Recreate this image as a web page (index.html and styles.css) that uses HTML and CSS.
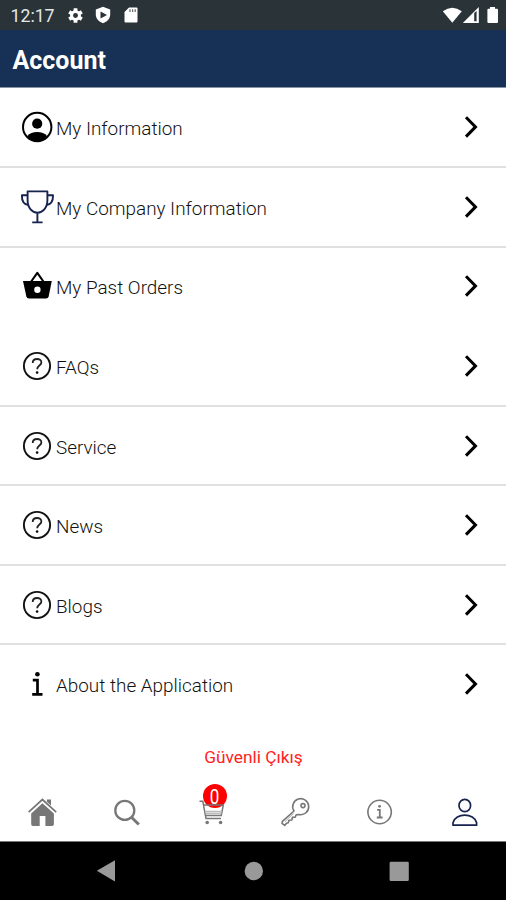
FILE: index.html
```html
<!DOCTYPE html>
<html lang="en">
<head>
<meta charset="utf-8">
<title>Account</title>
<link rel="stylesheet" href="styles.css">
</head>
<body>
<svg class="defs" aria-hidden="true">
  <symbol id="chevron" viewBox="0 0 16 26"><path d="M3 3.2 L12.5 12.9 L3 22.6" fill="none" stroke="#000" stroke-width="3"/></symbol>
  <symbol id="question" viewBox="0 0 36 36"><circle cx="18" cy="18" r="13.1" fill="none" stroke="#111" stroke-width="1.9"/><path d="M13.7 14.9 C13.7 9.8 22.4 9.7 22.4 14.5 C22.4 17.6 18.2 17.6 18.2 21.2" fill="none" stroke="#222" stroke-width="1.8"/><circle cx="18.1" cy="24.6" r="1.3" fill="#111"/></symbol>
</svg>
<div class="screen">
  <div class="status">
    <span class="time">12:17</span>
    <svg class="gear" viewBox="0 0 18 18"><g stroke="#fff" stroke-width="4"><path d="M9 1.3V16.7M2.3 5.1L15.7 12.9M2.3 12.9L15.7 5.1"/></g><circle cx="9" cy="9" r="5.7" fill="#fff"/><circle cx="9" cy="9" r="2.6" fill="#293338"/></svg>
    <svg class="shield" viewBox="0 0 16 18"><path d="M8 .8L15.2 3.4V8.5C15.2 12.5 12.2 15.8 8 17.2C3.8 15.8.8 12.5.8 8.5V3.4Z" fill="#fff"/><path d="M5.5 5.6L12 9L5.5 12.4Z" fill="#293338"/></svg>
    <svg class="card" viewBox="0 0 14 16"><path d="M5 .5H12.5Q13.5.5 13.5 1.5V14.5Q13.5 15.5 12.5 15.5H1.5Q.5 15.5.5 14.5V5Z" fill="#fff"/><path d="M6 2.2V5M8.6 2.2V5M11.2 2.2V5" stroke="#66706f" stroke-width="1.3"/></svg>
    <svg class="signals" viewBox="0 0 60 20"><path d="M2.8 6.3Q12.3-.7 21.8 6.3L12.3 17.7Z" fill="#fff"/><path d="M22.8 18L38.8 2V18Z" fill="#fff"/><path d="M34.2 8V16.2H36.6V6Z" fill="#293338"/><path d="M50 2H55V3.8H57Q58 3.8 58 4.8V17Q58 18 57 18H48.4Q47.4 18 47.4 17V4.8Q47.4 3.8 48.4 3.8H50Z" fill="#fff"/></svg>
  </div>
  <header class="header">Account</header>
  <main class="list">
    <div class="row"><svg class="icon" viewBox="0 0 36 36"><circle cx="18.2" cy="18" r="14.2" fill="none" stroke="#000" stroke-width="2"/><circle cx="18.2" cy="14.7" r="5.1"/><path d="M8.2 27.2C10.5 24.2 14 23 18.2 23S25.9 24.2 28.2 27.2C22.5 34 13.9 34 8.2 27.2Z"/></svg><span class="label">My Information</span><svg class="chevron"><use href="#chevron"/></svg></div>
    <div class="row"><svg class="icon" viewBox="0 0 36 36"><g fill="none" stroke="#17234f" stroke-width="1.9" stroke-linejoin="round"><path d="M8.6 2.4H28.4V11C28.4 19 23.5 23.6 18.4 23.6S8.6 19 8.6 11Z"/><path d="M8.5 6.2H2.9C2.7 12.4 4.5 15.4 9.6 16.1M28.5 6.2H34C34.2 12.4 32.4 15.4 27.3 16.1M18.4 24V33M13.2 33.4H23.6"/></g></svg><span class="label">My Company Information</span><svg class="chevron"><use href="#chevron"/></svg></div>
    <div class="row plain"><svg class="icon" viewBox="0 0 36 36"><path d="M4 13H32.8L29.7 28.3Q29.2 30.6 27 30.6H10Q7.8 30.6 7.3 28.3Z"/><path d="M12.2 13.5L18.3 4.9L24.4 13.5" fill="none" stroke="#000" stroke-width="2.1" stroke-linejoin="round"/><circle cx="18.4" cy="21.8" r="3.2" fill="#fff"/></svg><span class="label">My Past Orders</span><svg class="chevron"><use href="#chevron"/></svg></div>
    <div class="row"><svg class="icon"><use href="#question"/></svg><span class="label">FAQs</span><svg class="chevron"><use href="#chevron"/></svg></div>
    <div class="row"><svg class="icon"><use href="#question"/></svg><span class="label">Service</span><svg class="chevron"><use href="#chevron"/></svg></div>
    <div class="row"><svg class="icon"><use href="#question"/></svg><span class="label">News</span><svg class="chevron"><use href="#chevron"/></svg></div>
    <div class="row"><svg class="icon"><use href="#question"/></svg><span class="label">Blogs</span><svg class="chevron"><use href="#chevron"/></svg></div>
    <div class="row plain"><svg class="icon" viewBox="0 0 36 36"><circle cx="18.4" cy="8.2" r="2.3"/><path d="M13.8 14.1H18.5V28.4M13.2 28.4H23.5" fill="none" stroke="#000" stroke-width="2.7"/></svg><span class="label">About the Application</span><svg class="chevron"><use href="#chevron"/></svg></div>
  </main>
  <div class="logout">Güvenli Çıkış</div>
  <nav class="tabs">
    <div class="tab"><svg viewBox="0 0 32 32"><path d="M20.9 3.4H25V9.5L20.9 5.7Z" fill="#777"/><path d="M2.6 16.1L16.4 3.5L30.2 16.1" fill="none" stroke="#777" stroke-width="1.7"/><path d="M5.2 17.4L16.4 7.2L27.9 17.4V28.2Q27.9 29.9 26.2 29.9H19.4V20H13.7V29.9H7Q5.2 29.9 5.2 28.2Z" fill="#777"/></svg></div>
    <div class="tab"><svg viewBox="0 0 32 32"><circle cx="14.8" cy="14.4" r="9.5" fill="none" stroke="#777" stroke-width="2.3"/><path d="M21.5 21.2L28.8 28.5" stroke="#777" stroke-width="3"/></svg></div>
    <div class="tab"><span class="badge"><span class="count">0</span></span><svg viewBox="0 0 32 32"><g fill="none" stroke="#777" stroke-width="1.5"><path d="M4.5 5.2H7.8L11 22.6H26M8.8 9H28.3L26.3 19.5H10.8"/><path d="M10.3 15.6H27M10.6 17.6H26.6" stroke="#bbb"/></g><circle cx="12.2" cy="26.5" r="1.8" fill="#777"/><circle cx="25.6" cy="26.5" r="1.8" fill="#777"/></svg></div>
    <div class="tab"><svg viewBox="0 0 32 32"><g fill="none" stroke="#777" stroke-width="1.6" stroke-linejoin="round"><path d="M15 15A8 8 0 1 1 20.1 18.5L17.2 18.7L16.2 21.2L13.4 21.4L12.8 24L10 24.3L9.3 26.8L7.5 27.2L5.7 29.4L3 27.4L3.4 25.4Z"/><circle cx="24" cy="9.6" r="2"/></g><path d="M5.8 25.8L14.5 17.4" stroke="#aaa"/></svg></div>
    <div class="tab"><svg viewBox="0 0 32 32"><circle cx="16.6" cy="16" r="11.7" fill="none" stroke="#777" stroke-width="1.6"/><circle cx="16.6" cy="10.3" r="1.4" fill="#777"/><path d="M14.1 13.9H16.8V21.4M13.8 21.5H19.6" fill="none" stroke="#777" stroke-width="1.8"/></svg></div>
    <div class="tab"><svg viewBox="0 0 32 32"><g fill="none" stroke="#17234f" stroke-width="1.7" stroke-linejoin="round"><ellipse cx="16.8" cy="9.5" rx="5.8" ry="6.2"/><path d="M5 29.2V26.7C7.5 16.6 26.1 16.6 28.6 26.7V29.2Z"/></g></svg></div>
  </nav>
  <div class="system">
    <svg viewBox="0 0 506 58"><path d="M96.8 28.8L115 18.2V39.5Z" fill="#999"/><circle cx="253.8" cy="29" r="9.2" fill="#999"/><rect x="389.6" y="19.8" width="19.2" height="19.2" rx="1.3" fill="#999"/></svg>
  </div>
</div>
</body>
</html>
```

FILE: styles.css
```css
body { margin: 0; background: #fff; font-family: Roboto, "Liberation Sans", sans-serif; }
.defs { display: none; }
.screen { width: 506px; height: 900px; display: flex; flex-direction: column; overflow: hidden; }
.status { height: 30px; flex: none; background: #293338; display: flex; align-items: center; padding-left: 10.5px; box-sizing: border-box; }
.time { font-size: 17.7px; line-height: 30px; color: #e4e8e8; width: 56px; padding-top: 2px; }
.gear { width: 17px; height: 17px; }
.shield { width: 16px; height: 18px; margin-left: 11px; }
.card { width: 14px; height: 16px; margin-left: 13px; }
.signals { width: 60px; height: 20px; margin-left: auto; margin-right: 6px; }
.header { height: 58px; flex: none; box-sizing: border-box; background: #173056; border-bottom: 1px solid #8793a6; color: #fff; font-size: 25px; font-weight: 700; line-height: 62px; padding-left: 12.5px; }
.list { flex: none; height: 637px; padding-top: 0.6px; box-sizing: border-box; display: grid; grid-template-rows: repeat(8, 1fr); }
.row { display: flex; align-items: center; padding: 0 27px 0 19px; border-bottom: 2px solid #e0e0e0; }
.row.plain { border-bottom-color: transparent; }
.icon { width: 36px; height: 36px; flex: none; }
.label { flex: 1; font-size: 18.9px; font-weight: 350; line-height: 24px; color: #111; padding: 4px 0 0 1px; white-space: nowrap; }
.chevron { width: 16px; height: 26px; flex: none; }
.logout { height: 58px; flex: none; line-height: 65px; text-align: center; color: #f22; font-size: 17.3px; padding-left: 1px; }
.tabs { height: 58px; flex: none; display: grid; grid-template-columns: repeat(6, 1fr); border-bottom: 1px solid #777; }
.tab { position: relative; display: flex; align-items: center; justify-content: center; }
.tab svg { position: relative; width: 32px; height: 32px; }
.badge { position: absolute; left: 34px; top: 1px; width: 24px; height: 24px; border-radius: 50%; background: #f00; color: #fff; font-size: 20px; line-height: 26px; text-align: center; }
.count { display: inline-block; transform: scaleX(0.85); }
.system { height: 58px; flex: none; background: #000; }
.system svg { display: block; width: 506px; height: 58px; }
```
